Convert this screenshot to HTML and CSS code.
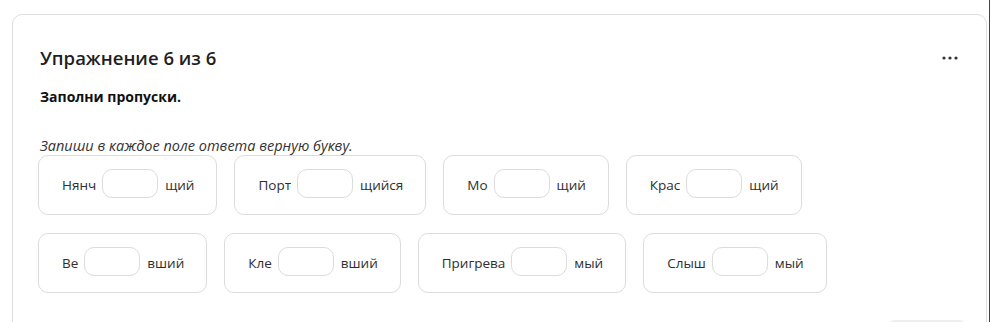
FILE: index.html
```html
<!DOCTYPE html>
<html>
<head>
    <title>Упражнение 6 из 6</title>
    <link rel="stylesheet" href="styles.css">
</head>
<body>
    <div class="page">
        <div class="card">
            <div class="card-head">
                <h2>Упражнение 6 из 6</h2>
                <button class="more" title="Ещё">
                    <svg width="16" height="4" viewBox="0 0 16 4">
                        <circle cx="2" cy="2" r="1.6" fill="#333"/>
                        <circle cx="8" cy="2" r="1.6" fill="#333"/>
                        <circle cx="14" cy="2" r="1.6" fill="#333"/>
                    </svg>
                </button>
            </div>
            <p class="task">Заполни пропуски.</p>
            <p class="hint">Запиши в каждое поле ответа верную букву.</p>

            <div class="words">
                <div class="word">Нянч <input type="text"> щий</div>
                <div class="word">Порт <input type="text"> щийся</div>
                <div class="word">Мо <input type="text"> щий</div>
                <div class="word">Крас <input type="text"> щий</div>
            </div>
            <div class="words">
                <div class="word">Ве <input type="text"> вший</div>
                <div class="word">Кле <input type="text"> вший</div>
                <div class="word">Пригрева <input type="text"> мый</div>
                <div class="word">Слыш <input type="text"> мый</div>
            </div>

            <div class="card-foot">
                <button class="check" aria-label="Проверить"></button>
            </div>
        </div>
    </div>
</body>
</html>
```

FILE: styles.css
```css
body {
    font-family: "Open Sans", "Noto Sans", sans-serif;
    background-color: #ffffff;
    margin: 0;
    padding: 0;
}
.page {
    width: 990px;
    height: 322px;
    overflow: hidden;
    border-right: 1px solid #444;
    box-sizing: border-box;
    padding: 14px 0 0 12px;
}
.card {
    width: 975px;
    box-sizing: border-box;
    border: 1px solid #dedede;
    border-radius: 10px;
    padding: 26px 28px 30px 27px;
    background: #ffffff;
}
.card-head {
    display: flex;
    justify-content: space-between;
    align-items: center;
}
.card-head h2 {
    margin: 0;
    font-size: 18.5px;
    font-weight: 600;
    color: #1f1f1f;
    line-height: 34px;
}
.more {
    background: none;
    border: none;
    padding: 0;
    width: 16px;
    height: 16px;
    display: flex;
    align-items: center;
}
.task {
    margin: 13px 0 0 0;
    font-size: 14px;
    font-weight: 700;
    color: #111;
    line-height: 18px;
}
.hint {
    margin: 30px 0 0 0;
    font-size: 14.5px;
    font-style: italic;
    color: #333;
    line-height: 19px;
}
.words {
    display: flex;
    gap: 17px;
    margin: 0 0 18px -2px;
}
.word {
    display: flex;
    align-items: center;
    gap: 6px;
    height: 60px;
    box-sizing: border-box;
    padding: 0 22px 0 23px;
    border: 1px solid #dcdcdc;
    border-radius: 10px;
    font-size: 13.5px;
    color: #2e2e2e;
}
.word input {
    width: 56px;
    height: 29px;
    box-sizing: border-box;
    border: 1px solid #dcdcdc;
    border-radius: 10px;
    margin: -4px 1px 0 0;
    font: inherit;
    padding: 0 8px;
}
.card-foot {
    display: flex;
    justify-content: flex-end;
    margin-top: 27px;
}
.check {
    width: 80px;
    height: 36px;
    border: none;
    border-radius: 8px;
    background: #eeeeee;
    margin-right: -9px;
}
```
